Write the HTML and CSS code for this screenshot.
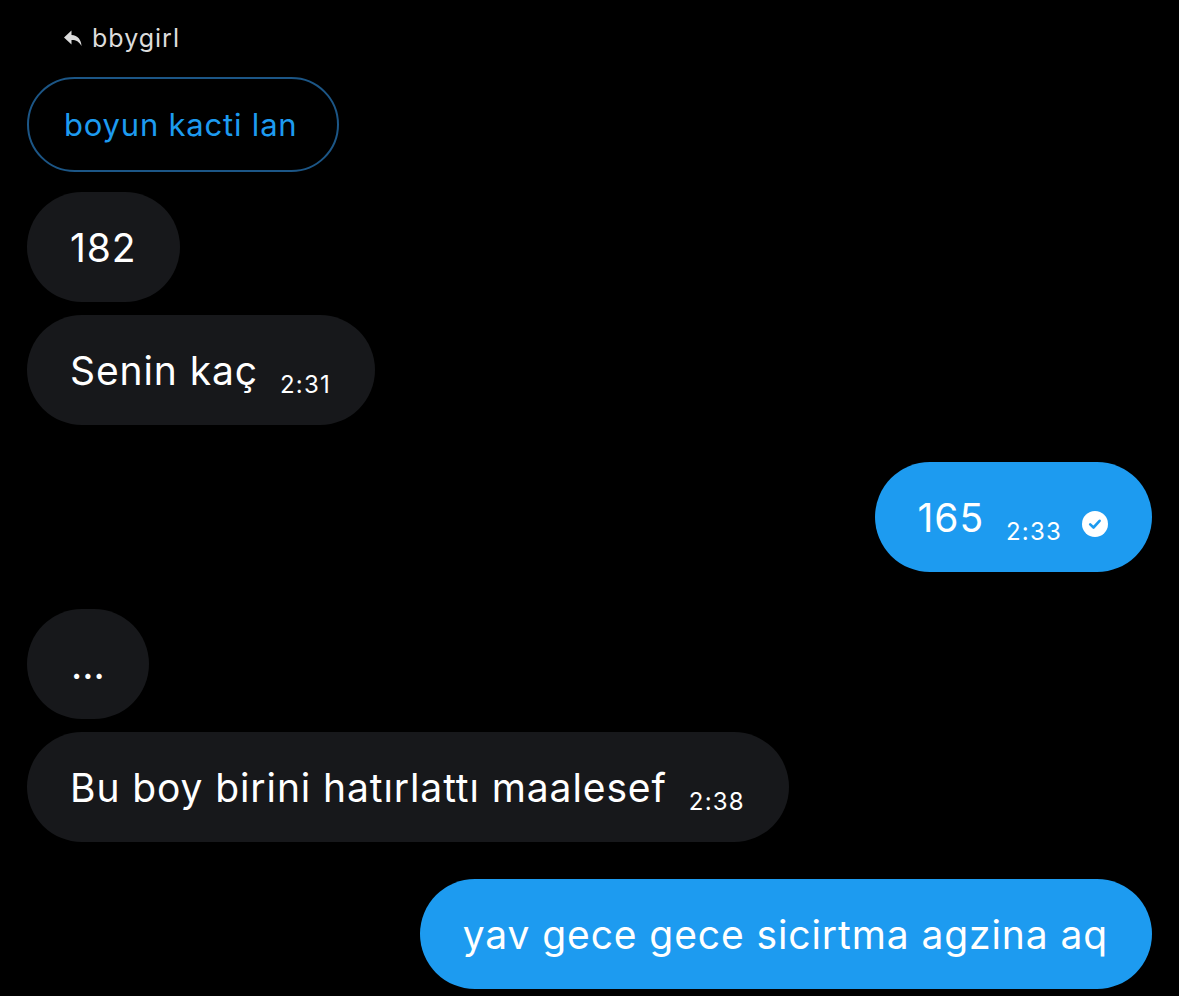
FILE: index.html
```html
<!DOCTYPE html>
<html lang="tr">
<head>
<meta charset="utf-8">
<link rel="stylesheet" href="styles.css">
</head>
<body>
<div class="chat">
  <div class="reply-head">
    <svg class="reply-icon" width="18" height="17" viewBox="0 0 18 17"><path d="M7.5 0.5 L0 7.5 L7.5 14.5 V10 C11.5 9.8 15 11.2 17.5 16 C17.3 10 13.8 5.3 7.5 5 Z" fill="#dcdcdc"/></svg>
    <span>bbygirl</span>
  </div>
  <div class="quoted">boyun kacti lan</div>
  <div class="bubble in first">182</div>
  <div class="bubble in near">Senin kaç<span class="time">2:31</span></div>
  <div class="bubble out far">165<span class="time">2:33</span><svg class="check" width="26" height="26" viewBox="0 0 26 26"><circle cx="13" cy="13" r="13" fill="#fff"/><path d="M8.2 13.4 L11.5 16.5 L17.6 9.8" fill="none" stroke="#1d9bf0" stroke-width="2.6" stroke-linecap="round" stroke-linejoin="round"/></svg></div>
  <div class="bubble in far dots">...</div>
  <div class="bubble in near">Bu boy birini hatırlattı maalesef<span class="time">2:38</span></div>
  <div class="bubble out far">yav gece gece sicirtma agzina aq</div>
</div>
</body>
</html>
```
FILE: styles.css
```css
html, body {
  margin: 0;
  padding: 0;
  background: #000;
}
body {
  font-family: Inter, "Noto Sans", sans-serif;
  color: #fff;
}
.chat {
  display: flex;
  flex-direction: column;
  align-items: flex-start;
  padding: 23px 27px 0 27px;
  height: 973px;
  overflow: hidden;
}
.reply-head {
  display: flex;
  align-items: center;
  gap: 10px;
  margin-left: 37px;
  color: #dcdcdc;
  font-size: 25px;
  letter-spacing: 1px;
  height: 30px;
}
.quoted {
  margin-top: 24px;
  box-sizing: border-box;
  height: 95px;
  padding: 0 40px 0 35px;
  border: 2px solid #1c5686;
  border-radius: 48px;
  color: #1d9bf0;
  font-size: 31px;
  letter-spacing: 0.8px;
  display: flex;
  align-items: center;
}
.bubble {
  box-sizing: border-box;
  height: 110px;
  padding: 0 44px 0 43px;
  border-radius: 55px;
  font-size: 39px;
  letter-spacing: 0.9px;
  display: flex;
  align-items: center;
  white-space: nowrap;
}
.bubble.in { background: #17181b; }
.bubble.out { background: #1d9bf0; align-self: flex-end; }
.bubble.first { margin-top: 20px; }
.bubble.near { margin-top: 13px; }
.bubble.far { margin-top: 37px; }
.bubble.dots { padding: 0 44px; letter-spacing: 0; }
.time {
  font-size: 24px;
  letter-spacing: 1.2px;
  margin-left: 22px;
  margin-top: 28px;
}
.check { margin-left: 20px; margin-top: 14px; }
```
